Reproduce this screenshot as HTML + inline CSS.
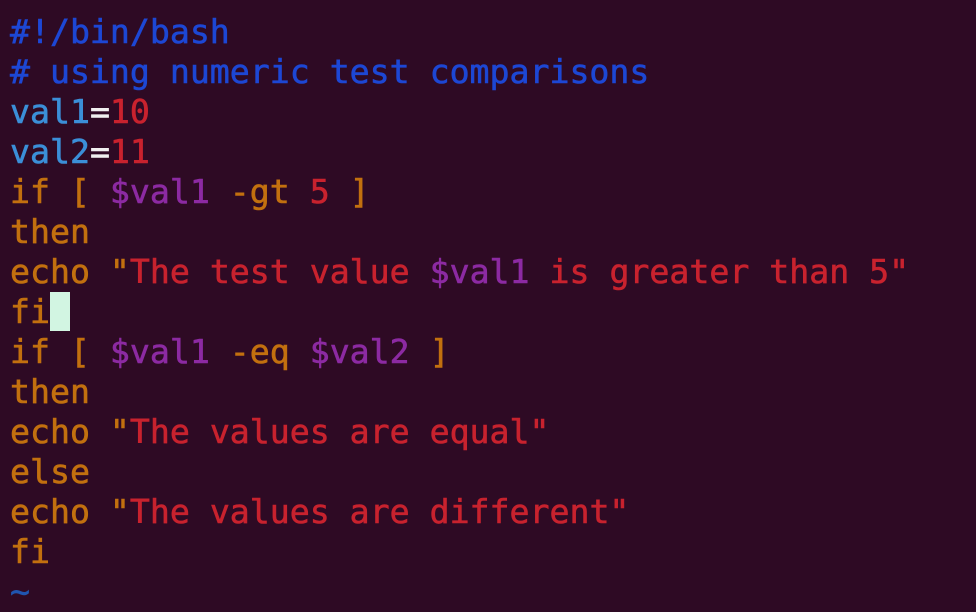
<!DOCTYPE html><html><head><style>
html,body{margin:0;width:976px;height:604px;background:#2e0a24;overflow:hidden}
pre{margin:0;position:absolute;left:10px;top:12px;font-family:"DejaVu Sans Mono","Liberation Mono",monospace;font-size:33.2px;line-height:40px;color:#c2700f;font-weight:normal;-webkit-text-stroke:0.6px currentColor}
.b{color:#1d47d4}.c{color:#3b8fd8}.w{color:#f0f0f0}.r{color:#c8222e}.p{color:#8c2aa2}.t{color:#2055b0}
.cur{background:#d2f5e2;color:#d2f5e2}
</style></head><body><pre><span class="b">#!/bin/bash
# using numeric test comparisons</span>
<span class="c">val1</span><span class="w">=</span><span class="r">10</span>
<span class="c">val2</span><span class="w">=</span><span class="r">11</span>
if [ <span class="p">$val1</span> -gt <span class="r">5</span> ]
then
echo "<span class="r">The test value </span><span class="p">$val1</span><span class="r"> is greater than 5"</span>
fi<span class="cur"> </span>
if [ <span class="p">$val1</span> -eq <span class="p">$val2</span> ]
then
echo "<span class="r">The values are equal"</span>
else
echo "<span class="r">The values are different"</span>
fi
<span class="t">~</span></pre></body></html>
